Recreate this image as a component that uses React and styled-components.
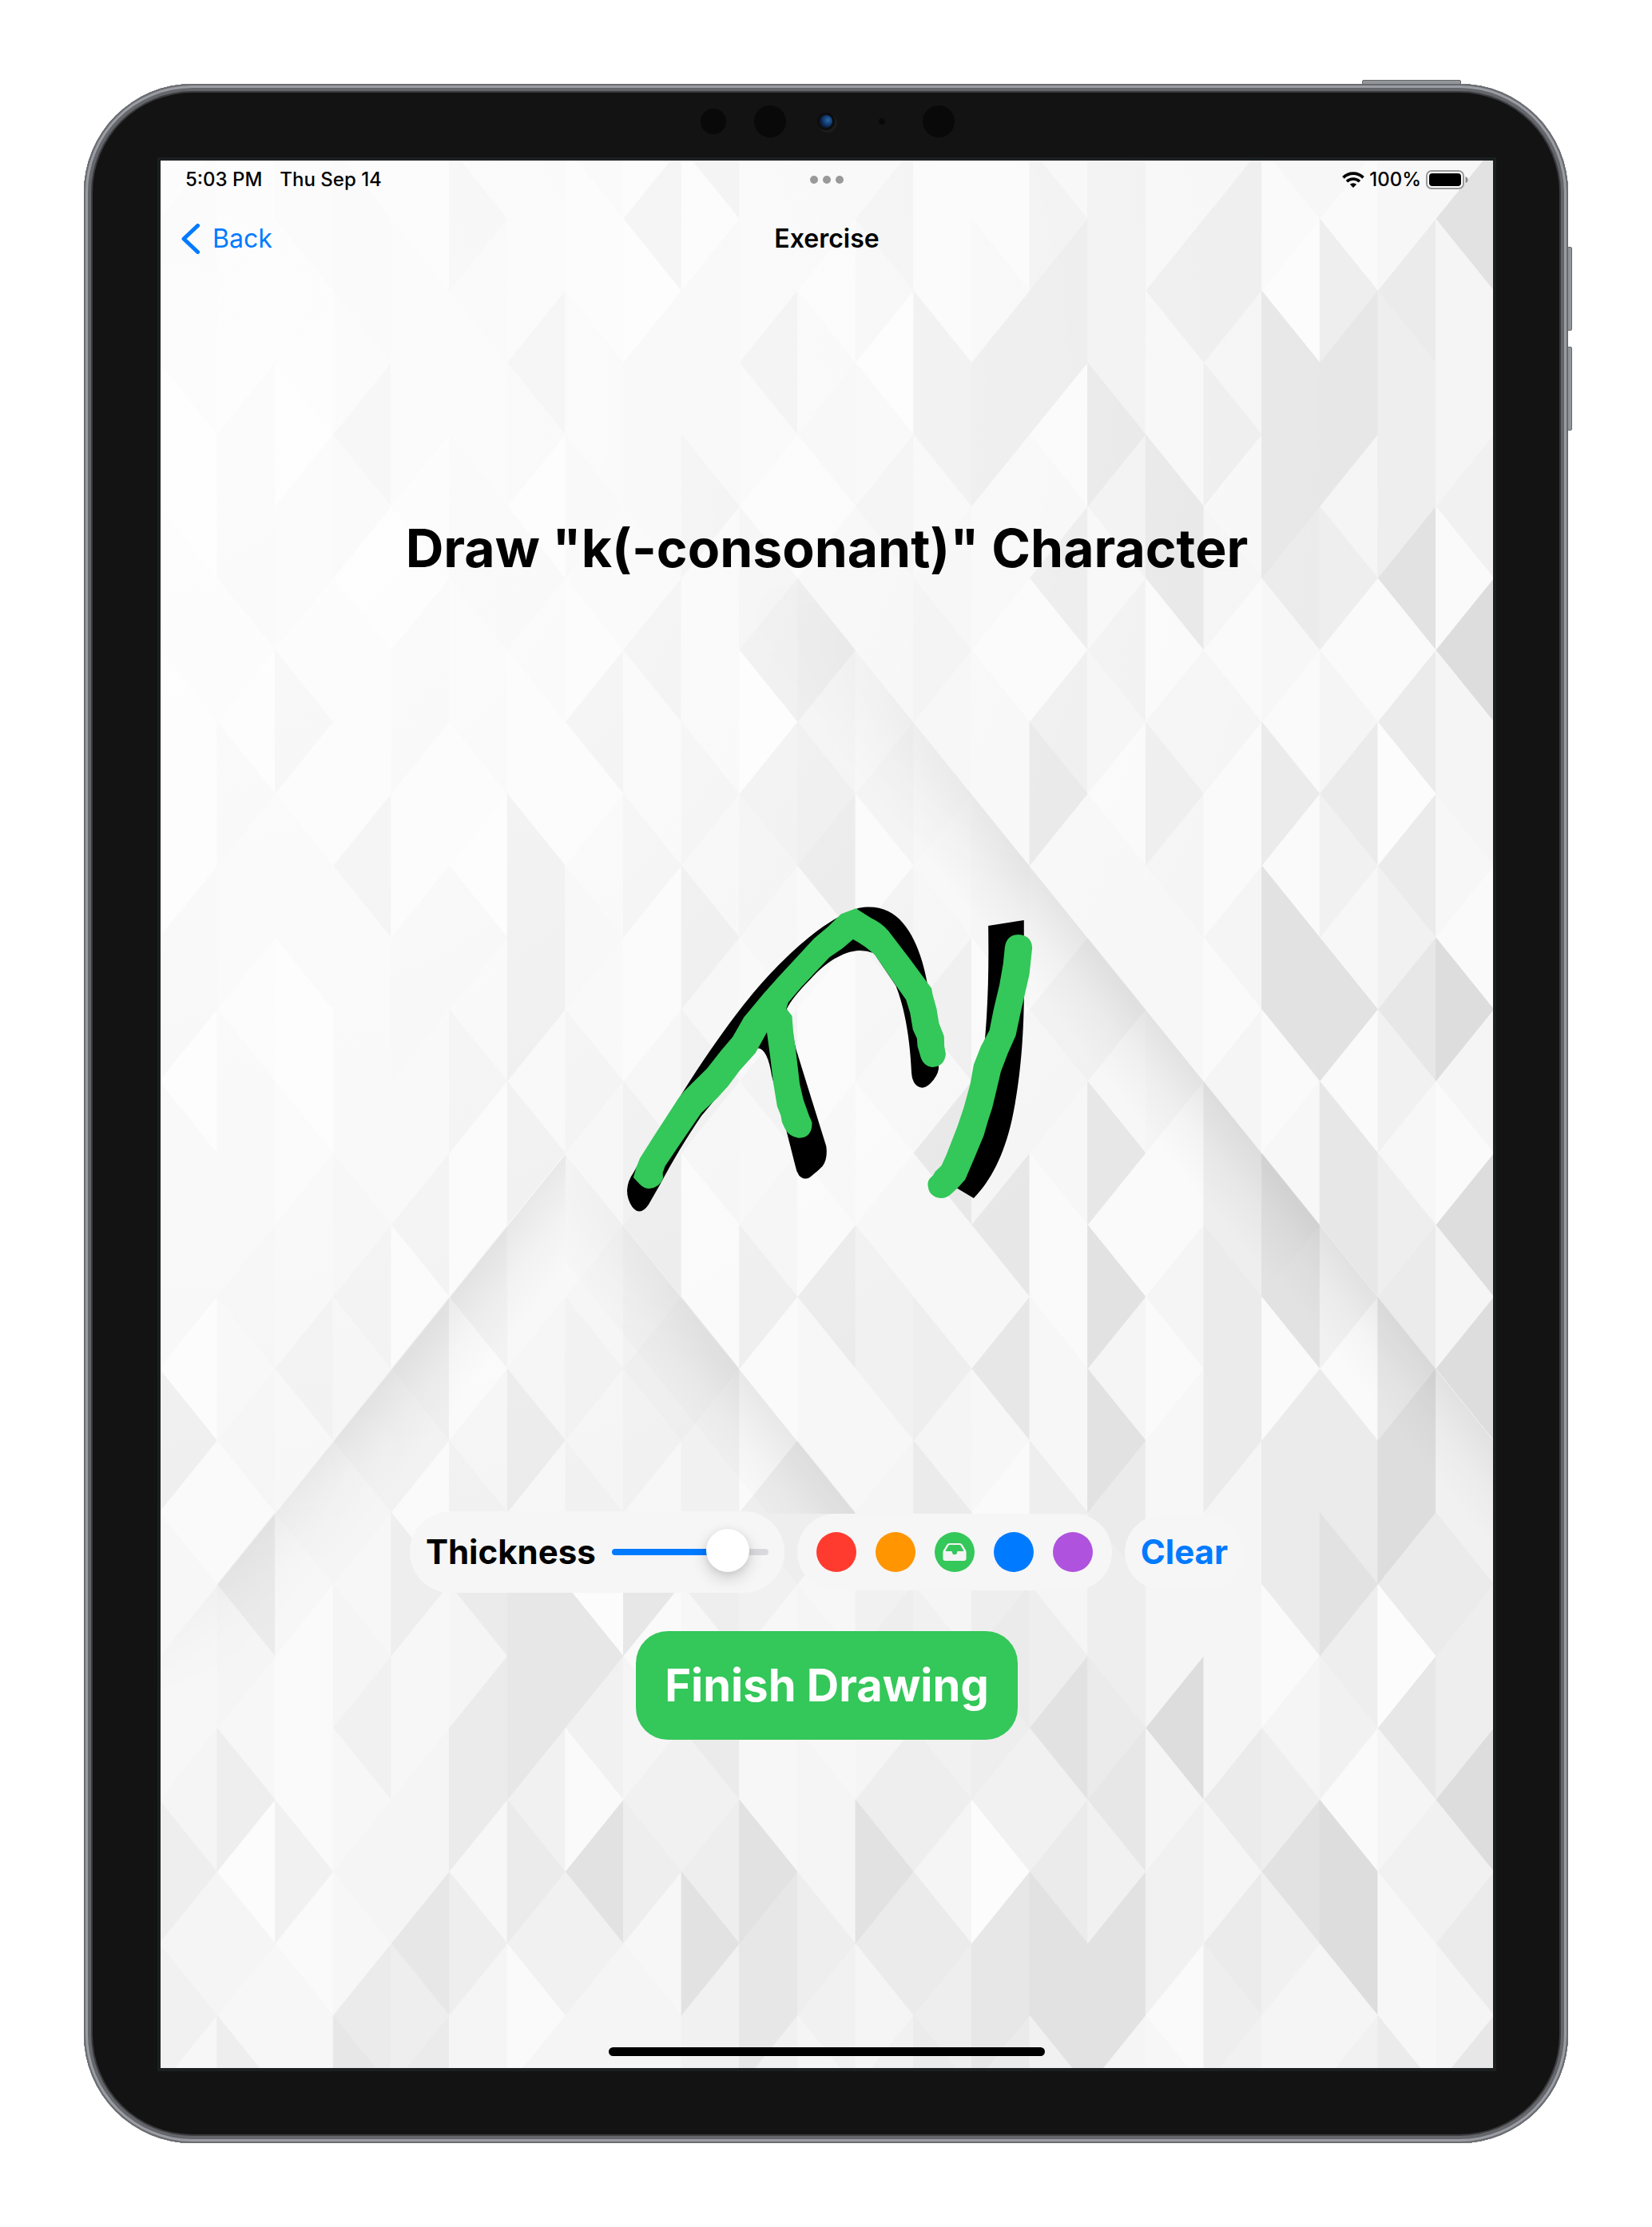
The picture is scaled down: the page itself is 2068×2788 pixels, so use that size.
import React, { useState } from "react";
import styled, { createGlobalStyle } from "styled-components";

const GlobalStyle = createGlobalStyle`
  *, *::before, *::after { box-sizing: border-box; }
  body {
    margin: 0;
    background: #fff;
    color: #000;
    font-family: Inter, "Liberation Sans", sans-serif;
  }
  button, input { font: inherit; }
`;

const Page = styled.div`
  padding: 105px;
`;

const Device = styled.div`
  position: relative;
  padding: 11px;
  border-radius: 136px;
  background: #131313;
  box-shadow:
    inset 0 0 0 2px #6a6c70,
    inset 0 0 0 5px #9a9da3,
    inset 0 0 0 9px #65666b,
    inset 0 0 0 11px #3a3b3d;
`;

const SideButton = styled.span`
  position: absolute;
  top: ${(p) => p.$top}px;
  right: ${(p) => p.$right}px;
  width: ${(p) => p.$width}px;
  height: ${(p) => p.$height}px;
  border: 1px solid #66686b;
  border-radius: 2px;
  background: #92969a;
`;

const CameraBar = styled.div`
  display: flex;
  justify-content: center;
  height: 85px;
  padding: 16px 0 0 4px;
`;

const Bezel = styled.div`
  padding: 0 83px 83px 85px;
`;

const Screen = styled.div`
  display: grid;
  grid-template-columns: minmax(0, 1fr);
  overflow: hidden;
  background: #f8f8f8;
  box-shadow: 0 0 0 4px #1b1f1f;
`;

const Wallpaper = styled.svg`
  grid-area: 1 / 1;
  width: 100%;
  height: 100%;
  min-height: 0;
`;

const Content = styled.div`
  grid-area: 1 / 1;
  z-index: 1;
  display: flex;
  flex-direction: column;
  align-items: stretch;
  aspect-ratio: 1668 / 2388;
`;

const StatusBar = styled.header`
  display: grid;
  grid-template-columns: 1fr auto 1fr;
  align-items: center;
  height: 48px;
  padding: 0 31px;
  font-size: 24px;
  font-weight: 500;
  line-height: 28px;
`;

const StatusLeft = styled.div`
  display: flex;
  gap: 22px;
`;

const StatusRight = styled.div`
  display: flex;
  align-items: center;
  justify-content: flex-end;
  gap: 6px;
`;

const Dots = styled.div`
  display: flex;
  gap: 6px;
`;

const Dot = styled.span`
  width: 10px;
  height: 10px;
  border-radius: 50%;
  background: #999;
`;

const NavBar = styled.nav`
  display: grid;
  grid-template-columns: 1fr auto 1fr;
  align-items: center;
  height: 100px;
  padding: 0 25px;
`;

const BackLink = styled.a`
  display: flex;
  align-items: center;
  justify-self: start;
  gap: 16px;
  color: #007aff;
  font-size: 32px;
  line-height: 40px;
  text-decoration: none;
`;

const NavTitle = styled.span`
  font-size: 32px;
  font-weight: 600;
  line-height: 40px;
`;

const Main = styled.main`
  display: flex;
  flex-direction: column;
  align-items: center;
  flex: 1;
  padding-top: 297px;
`;

const Title = styled.h1`
  margin: 0;
  font-size: 66px;
  font-weight: 700;
  line-height: 80px;
`;

const Drawing = styled.svg`
  display: block;
  width: 560px;
  height: 430px;
  margin: 384px 0 352px;
`;

const Tools = styled.div`
  display: flex;
  align-items: center;
  gap: 16px;
  margin-bottom: 48px;
`;

const SliderPanel = styled.div`
  display: flex;
  align-items: center;
  gap: 20px;
  height: 102px;
  padding: 0 20px;
  border-radius: 51px;
  background: #f6f6f6;
  font-size: 42px;
  font-weight: 700;
  line-height: 52px;
`;

const Slider = styled.input`
  appearance: none;
  width: 196px;
  height: 54px;
  margin: 0;
  background: transparent;

  &::-webkit-slider-runnable-track {
    height: 8px;
    border-radius: 4px;
    background: linear-gradient(to right, #007aff ${(p) => p.$fill}%, #dadadc ${(p) => p.$fill}%);
  }

  &::-webkit-slider-thumb {
    appearance: none;
    width: 54px;
    height: 54px;
    margin-top: -25px;
    border-radius: 50%;
    background: #fff;
    box-shadow: 0 8px 20px rgba(0, 0, 0, 0.16), 0 2px 8px rgba(0, 0, 0, 0.08);
  }
`;

const ColorPanel = styled.fieldset`
  display: flex;
  align-items: center;
  gap: 24px;
  height: 96px;
  margin: 0;
  padding: 0 24px;
  border: 0;
  border-radius: 48px;
  background: #f6f6f6;
`;

const Swatch = styled.label`
  display: grid;
  place-items: center;
  width: 50px;
  height: 50px;
  border-radius: 50%;
  background: ${(p) => p.$color};

  & > * { grid-area: 1 / 1; }
`;

const SwatchInput = styled.input`
  appearance: none;
  width: 50px;
  height: 50px;
  margin: 0;
  border-radius: 50%;
`;

const ClearButton = styled.button`
  height: 93px;
  padding: 0 20px;
  border: 0;
  border-radius: 47px;
  background: #f6f6f6;
  color: #007aff;
  font-size: 42px;
  font-weight: 700;
  line-height: 52px;
`;

const FinishButton = styled.button`
  height: 136px;
  padding: 0 36px;
  border: 0;
  border-radius: 40px;
  background: #34c759;
  color: #fff;
  font-size: 56px;
  font-weight: 700;
  line-height: 72px;
`;

const HomeIndicator = styled.div`
  width: 546px;
  height: 11px;
  margin: auto 0 15px;
  border-radius: 6px;
  background: #000;
`;

const TONES = ["#fcfcfc", "#fafafa", "#f7f7f7", "#f5f5f5", "#f1f1f1", "#eeeeee", "#ebebeb", "#e7e7e7", "#e2e2e2", "#dddddd"];

/* One string per column, one shade digit per triangle from top to bottom. */
const COLUMNS = [
  "1222001100033022205122235342",
  "1111333103221222323163250325",
  "2211022141220012242321114122",
  "1332530111522223434323423267",
  "1122210331133224154152233756",
  "2432233221032411413463662533",
  "2225303211666252236277746413",
  "2112232151232432343407418433",
  "1503332522411356454271345233",
  "5133352224363531154452645844",
  "2225214605432423511542228774",
  "2212313746721121622523233543",
  "2430243334143212442345358634",
  "1115523433235272253634453656",
  "1126622122331337272156540776",
  "2466126157224321122535846884",
  "4444742431224271838655674883",
  "2252277135322311312233934412",
  "2553523131131355666333363654",
  "2107776216188128816661358433",
  "2157735136428177416685419934",
  "2265558160647425679960734226",
  "2833341933219319394465594637",
];

const COL_WIDTH = 72.65;
const ROW_STEP = 89.96;
const GRID_TOP = -106.3;
const GRID_LEFT = -1.7;
const px = (k) => GRID_LEFT + k * COL_WIDTH;
const py = (m) => GRID_TOP + m * ROW_STEP;

const SHADOWS = [
  { id: "upper", from: [870, 614], to: [796, 674], strength: 0.075, fade: [520, 900], points: "652,344 1451,1333 1378,1423 620,480" },
  { id: "far", from: [1450, 1333], to: [1384, 1386], strength: 0.06, fade: [1200, 1300], points: "1451,1333 1668,1602 1668,1760 1378,1423" },
  { id: "middle", from: [652, 1424], to: [570, 1490], strength: 0.07, fade: [1150, 1500], points: "507,1244 870,1694 760,1694 507,1380" },
  { id: "lower", from: [289, 1514], to: [360, 1571], strength: 0.065, fade: [1930, 1560], points: "507,1244 0,1872 0,2010 507,1390" },
];

function Background() {
  const shapes = [];
  COLUMNS.forEach((column, k) => {
    [...column].forEach((digit, i) => {
      const c = i + 1;
      const flat = (k + c) % 2 ? k : k + 1;
      const apex = flat === k ? k + 1 : k;
      const fill = TONES[Number(digit)];
      shapes.push(
        <polygon
          key={k + "-" + c}
          points={`${px(flat)},${py(c - 1)} ${px(flat)},${py(c + 1)} ${px(apex)},${py(c)}`}
          fill={fill}
          stroke={fill}
          strokeWidth="1"
        />
      );
    });
  });
  return (
    <Wallpaper viewBox="0 0 1668 2388" preserveAspectRatio="xMidYMid slice" aria-hidden="true">
      <defs>
        <radialGradient id="light" gradientUnits="userSpaceOnUse" cx="0" cy="300" r="1500">
          <stop offset="0" stopColor="#fff" stopOpacity="0.62" />
          <stop offset="0.45" stopColor="#fff" stopOpacity="0.4" />
          <stop offset="1" stopColor="#fff" stopOpacity="0" />
        </radialGradient>
        {SHADOWS.map((s) => (
          <React.Fragment key={s.id}>
            <linearGradient id={`${s.id}-fall`} gradientUnits="userSpaceOnUse" x1={s.from[0]} y1={s.from[1]} x2={s.to[0]} y2={s.to[1]}>
              <stop offset="0" stopColor="#000" stopOpacity={s.strength} />
              <stop offset="0.5" stopColor="#000" stopOpacity={s.strength * 0.35} />
              <stop offset="1" stopColor="#000" stopOpacity="0" />
            </linearGradient>
            <linearGradient id={`${s.id}-fade`} gradientUnits="userSpaceOnUse" x1="0" y1={s.fade[0]} x2="0" y2={s.fade[1]}>
              <stop offset="0" stopColor="#000" />
              <stop offset="1" stopColor="#fff" />
            </linearGradient>
            <mask id={`${s.id}-mask`} maskUnits="userSpaceOnUse" x="0" y="0" width="1668" height="2388">
              <rect width="1668" height="2388" fill={`url(#${s.id}-fade)`} />
            </mask>
          </React.Fragment>
        ))}
      </defs>
      {shapes}
      <rect width="1668" height="2388" fill="url(#light)" />
      {SHADOWS.map((s) => (
        <polygon key={s.id} points={s.points} fill={`url(#${s.id}-fall)`} mask={`url(#${s.id}-mask)`} />
      ))}
    </Wallpaper>
  );
}

function Cameras() {
  return (
    <svg width="320" height="40" viewBox="0 0 320 40" aria-hidden="true">
      <defs>
        <radialGradient id="lens" cx="0.65" cy="0.4" r="0.6">
          <stop offset="0" stopColor="#2a6aa8" />
          <stop offset="0.6" stopColor="#123a6e" />
          <stop offset="1" stopColor="#0a1b3c" />
        </radialGradient>
      </defs>
      <circle cx="17" cy="20" r="16" fill="#090909" />
      <circle cx="88" cy="20" r="20" fill="#090909" />
      <circle cx="160" cy="22" r="12" fill="#1c1c1c" />
      <circle cx="158" cy="20" r="11" fill="#0d0d0d" />
      <circle cx="158" cy="20" r="8" fill="url(#lens)" />
      <circle cx="228" cy="20" r="4" fill="#090909" />
      <circle cx="299" cy="20" r="20" fill="#090909" />
    </svg>
  );
}

function WifiIcon() {
  return (
    <svg width="28" height="20" viewBox="0 0 28 20" aria-hidden="true">
      <path d="M1.500 7.300A17.800 17.800 0 0 1 26.500 7.300" fill="none" stroke="#000" strokeWidth="3.800" />
      <path d="M6 12.200A11.500 11.500 0 0 1 22 12.200" fill="none" stroke="#000" strokeWidth="3.600" />
      <path d="M9.800 15.800A6.200 6.200 0 0 1 18.200 15.800L14 20Z" fill="#000" />
    </svg>
  );
}

function BatteryIcon() {
  return (
    <svg width="53" height="24" viewBox="0 0 53 24" aria-hidden="true">
      <rect x="1" y="1" width="46" height="22" rx="6" fill="#fff" fillOpacity="0.6" stroke="#999" strokeWidth="2" />
      <rect x="4" y="4" width="40" height="16" rx="4" fill="#000" />
      <path d="M49.500 8Q52.500 9 52.500 12T49.500 16Z" fill="#888" />
    </svg>
  );
}

function TrayIcon() {
  return (
    <svg width="30" height="24" viewBox="0 0 30 24" aria-hidden="true">
      <path
        fill="#f4f4f4"
        fillRule="evenodd"
        d="M8.500 1H21.500Q23.500 1 24.500 2.600L28.800 9.500Q29.600 11 29.600 12.500V20Q29.600 23 26.500 23H3.500Q0.400 23 0.400 20V12.500Q0.400 11 1.200 9.500L5.500 2.600Q6.500 1 8.500 1ZM8.800 3Q7.800 3 7.300 3.900L3.700 10.200Q3.400 11 4.300 11H10.800Q12 11 12 12.200A3 3 0 0 0 18 12.200Q18 11 19.200 11H25.700Q26.600 11 26.300 10.200L22.700 3.900Q22.200 3 21.200 3Z"
      />
    </svg>
  );
}

function CharacterDrawing() {
  return (
    <Drawing viewBox="-14 0 1568 1290" preserveAspectRatio="none" role="img" aria-label="Character drawing">
      <path
        fill="#000"
        d="M70 1140Q72 1105 92 1075L120 1020L275 755C340 645 430 505 510 402C590 300 740 130 882 80C915 73 955 75 985 92C1060 130 1104 250 1122 362L1162 600V685Q1158 712 1134 738Q1105 770 1080 742Q1069 728 1067 700C1062 590 1048 470 1012 372L935 250Q910 240 885 240C825 242 760 290 715 345Q650 415 630 458L662 610L768 975Q774 1022 755 1050Q737 1070 710 1092Q692 1104 673 1085Q663 1070 660 1050L628 915L577 710Q562 608 528 607L440 720L330 862C280 940 230 1030 185 1120L145 1195Q116 1240 88 1203Q70 1175 70 1140Z"
      />
      <path fill="#000" d="M1336 147L1461 126V430C1458 630 1440 770 1418 880C1390 1010 1345 1105 1285 1170L1225 1132L1310 700L1325 565C1336 420 1338 300 1336 147Z" />
      <path
        fill="#34c759"
        d="M92 1092L102 1055L115 1020L165 935L250 795L270 768L350 683L400 615L440 565L480 490L550 400L600 340L665 265L725 195L775 150L820 103L872 82L925 118Q960 135 985 165L1060 270L1137 382L1141 405L1155 460L1163 512L1181 562L1182 600L1187 628Q1183 676 1140 678Q1105 676 1095 625L1088 600L1086 570L1072 538L1062 475L1048 425L1015 375L940 258Q905 222 862 198L825 232L780 265L740 310L680 378L635 435L628 458L648 485L652 540L662 620L675 740L688 800L708 860L718 885Q720 943 672 944Q640 940 625 912L613 885L609 860L596 825L583 740L573 650L560 547L520 625L465 690L425 748L385 795L330 850L250 975L203 1050L195 1075L196 1095Q185 1130 148 1134Q130 1134 115 1118Z"
      />
      <path
        fill="#34c759"
        d="M1394 228Q1400 180 1443 180Q1488 184 1490 230L1485 280L1480 330L1465 400L1450 470L1432 560L1405 625L1380 695L1368 750L1350 830L1335 880L1320 935L1285 1025L1255 1100L1230 1130L1205 1155Q1190 1170 1170 1170Q1126 1165 1124 1118Q1124 1098 1142 1085L1150 1070L1172 1048L1190 1005L1228 900L1250 830L1273 740L1285 668L1310 600L1340 540L1355 460L1375 370L1388 290Z"
      />
    </Drawing>
  );
}

const COLORS = [
  { name: "Red", value: "#ff3b30" },
  { name: "Orange", value: "#ff9500" },
  { name: "Green", value: "#34c759" },
  { name: "Blue", value: "#007aff" },
  { name: "Purple", value: "#af52de" },
];

export default function App() {
  const [thickness, setThickness] = useState(83);
  const [color, setColor] = useState("Green");
  const fill = 14 + thickness * 0.72;

  return (
    <>
      <GlobalStyle />
      <Page>
        <Device>
          <SideButton $top={-5} $right={134} $width={124} $height={6} />
          <SideButton $top={204} $right={-5} $width={6} $height={105} />
          <SideButton $top={329} $right={-5} $width={6} $height={105} />
          <CameraBar>
            <Cameras />
          </CameraBar>
          <Bezel>
            <Screen>
              <Background />
              <Content>
                <StatusBar>
                  <StatusLeft>
                    <span>5:03 PM</span>
                    <span>Thu Sep 14</span>
                  </StatusLeft>
                  <Dots>
                    <Dot />
                    <Dot />
                    <Dot />
                  </Dots>
                  <StatusRight>
                    <WifiIcon />
                    <span>100%</span>
                    <BatteryIcon />
                  </StatusRight>
                </StatusBar>
                <NavBar>
                  <BackLink href="#back">
                    <svg width="24" height="38" viewBox="0 0 24 38" aria-hidden="true">
                      <path d="M21.500 2.500L4 19L21.500 35.500" fill="none" stroke="#007aff" strokeWidth="5" strokeLinecap="round" strokeLinejoin="round" />
                    </svg>
                    Back
                  </BackLink>
                  <NavTitle>Exercise</NavTitle>
                </NavBar>
                <Main>
                  <Title>Draw "k(-consonant)" Character</Title>
                  <CharacterDrawing />
                  <Tools>
                    <SliderPanel>
                      <label htmlFor="thickness">Thickness</label>
                      <Slider
                        id="thickness"
                        type="range"
                        min="0"
                        max="100"
                        value={thickness}
                        $fill={fill}
                        onChange={(e) => setThickness(Number(e.target.value))}
                      />
                    </SliderPanel>
                    <ColorPanel aria-label="Color">
                      {COLORS.map((c) => (
                        <Swatch key={c.name} $color={c.value}>
                          <SwatchInput
                            type="radio"
                            name="color"
                            aria-label={c.name}
                            checked={color === c.name}
                            onChange={() => setColor(c.name)}
                          />
                          {color === c.name && <TrayIcon />}
                        </Swatch>
                      ))}
                    </ColorPanel>
                    <ClearButton type="button">Clear</ClearButton>
                  </Tools>
                  <FinishButton type="button">Finish Drawing</FinishButton>
                  <HomeIndicator />
                </Main>
              </Content>
            </Screen>
          </Bezel>
        </Device>
      </Page>
    </>
  );
}
